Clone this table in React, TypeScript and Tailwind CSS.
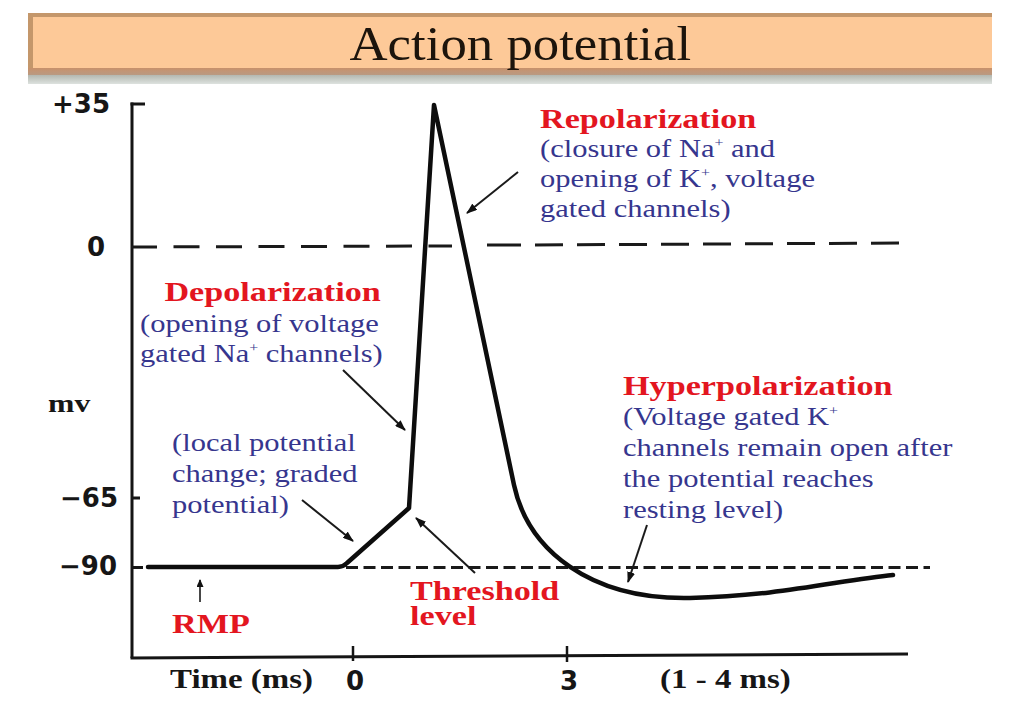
import React from "react";

const serif = "font-['Liberation_Serif','Times_New_Roman',serif]";
const sans = "font-['DejaVu_Sans','Verdana',sans-serif]";
const sup = "text-[13px] top-[-10px]";

export default function App() {
  return (
    <div className="w-[1013px] h-[707px] bg-white pt-[13px] overflow-hidden">
      <div className="ml-[28px] w-[964px]">
        <div className="h-[55px] border-t-4 border-l-[5px] border-[#c4976b] bg-[#fdc998] flex items-center justify-center">
          <h1
            className={`${serif} text-[48px] leading-none text-[#1c140c] scale-x-[1.1] translate-x-[8px] mt-[3px] whitespace-nowrap`}
          >
            Action potential
          </h1>
        </div>
        <div className="h-[7px] bg-linear-to-b from-[#c8916b] to-[#b99a82]" />
        <div className="h-[9px] bg-linear-to-b from-[#b4b8b0] to-[#dde2df]" />
      </div>

      <div className="relative h-[623px]">
        <svg
          className="absolute inset-0"
          width="1013"
          height="623"
          viewBox="0 84 1013 623"
        >
          <defs>
            <marker
              id="ah"
              viewBox="0 0 11 8"
              refX="10"
              refY="4"
              markerWidth="11"
              markerHeight="8"
              markerUnits="userSpaceOnUse"
              orient="auto"
            >
              <path d="M0,0 L11,4 L0,8 z" fill="#111" />
            </marker>
            <marker
              id="ahs"
              viewBox="0 0 8 7"
              refX="7"
              refY="3.5"
              markerWidth="8"
              markerHeight="7"
              markerUnits="userSpaceOnUse"
              orient="auto"
            >
              <path d="M0,0 L8,3.5 L0,7 z" fill="#111" />
            </marker>
          </defs>

          {/* axes */}
          <g stroke="#151515" strokeWidth="3" fill="none">
            <line x1="132" y1="102.5" x2="132" y2="658" />
            <line x1="130.5" y1="104" x2="145" y2="104" />
            <line x1="132" y1="498" x2="140" y2="498" />
            <line x1="131" y1="567.5" x2="143" y2="567.5" />
            <line x1="130.5" y1="658" x2="908" y2="654" />
          </g>
          <g stroke="#151515" strokeWidth="2.5">
            <line x1="353" y1="646" x2="353" y2="661" />
            <line x1="567" y1="646" x2="567" y2="662" />
          </g>

          {/* zero dashed line */}
          <g stroke="#1a1a1a" strokeWidth="3" fill="none">
            <line x1="131" y1="247" x2="452" y2="246" strokeDasharray="26 16.5" />
            <line x1="487" y1="245" x2="521" y2="245" />
            <line x1="535" y1="245" x2="900" y2="243" strokeDasharray="28 14" />
          </g>

          {/* -90 dashed line */}
          <line
            x1="346"
            y1="567.5"
            x2="930"
            y2="567.5"
            stroke="#1a1a1a"
            strokeWidth="3"
            strokeDasharray="12 5.5"
          />

          {/* action potential curve */}
          <path
            d="M 148 567 L 338 567 Q 343 567 347 563 L 409 508 L 434 105 L 514 485 C 528 550, 590 600, 690 598 C 780 596, 840 580, 893 575"
            stroke="#0d0d0d"
            strokeWidth="4.5"
            fill="none"
            strokeLinejoin="round"
            strokeLinecap="round"
          />

          {/* arrows */}
          <g stroke="#1a1a1a" strokeWidth="2" fill="none" markerEnd="url(#ah)">
            <line x1="518" y1="172" x2="467" y2="213" />
            <line x1="343" y1="370" x2="405" y2="430" />
            <line x1="302" y1="500" x2="353" y2="541" />
            <line x1="475" y1="573" x2="416" y2="518" />
            <line x1="647" y1="525" x2="628" y2="582" />
          </g>
          <line
            x1="200"
            y1="602"
            x2="200"
            y2="580"
            stroke="#1a1a1a"
            strokeWidth="1.6"
            markerEnd="url(#ahs)"
          />
        </svg>

        {/* y axis labels */}
        <div className={`${sans} absolute left-[52px] top-[5px] text-[26px] leading-[30px] font-bold text-[#161616]`}>+35</div>
        <div className={`${sans} absolute left-[87px] top-[148px] text-[26px] leading-[30px] font-bold text-[#161616]`}>0</div>
        <div className={`${serif} absolute left-[48px] top-[305px] text-[26px] leading-[30px] font-bold text-[#161616] origin-left scale-x-[1.22]`}>mv</div>
        <div className={`${sans} absolute left-[60px] top-[399px] text-[26px] leading-[30px] font-bold text-[#161616]`}>−65</div>
        <div className={`${sans} absolute left-[59px] top-[467px] text-[26px] leading-[30px] font-bold text-[#161616]`}>−90</div>

        {/* x axis labels */}
        <div className={`${serif} absolute left-[170px] top-[580px] text-[27px] leading-[30px] font-bold text-[#161616] origin-left scale-x-[1.22] whitespace-nowrap`}>Time (ms)</div>
        <div className={`${sans} absolute left-[346px] top-[582px] text-[26px] leading-[30px] font-bold text-[#161616]`}>0</div>
        <div className={`${sans} absolute left-[560px] top-[582px] text-[26px] leading-[30px] font-bold text-[#161616]`}>3</div>
        <div className={`${serif} absolute left-[660px] top-[580px] text-[27px] leading-[30px] font-bold text-[#161616] origin-left scale-x-[1.22] whitespace-nowrap`}>(1 - 4 ms)</div>

        {/* Repolarization */}
        <div className={`${serif} absolute left-[540px] top-[20px] origin-left scale-x-[1.22] whitespace-nowrap flex flex-col`}>
          <div className="text-[28px] leading-[30px] font-bold text-[#e3161f]">Repolarization</div>
          <div className="text-[25px] leading-[30px] text-[#36368e] flex flex-col">
            <div>
              (closure of Na<sup className={sup}>+</sup> and
            </div>
            <div>
              opening of K<sup className={sup}>+</sup>, voltage
            </div>
            <div>gated channels)</div>
          </div>
        </div>

        {/* Depolarization */}
        <div className={`${serif} absolute left-[140px] top-[191px] origin-left scale-x-[1.22] whitespace-nowrap flex flex-col`}>
          <div className="pl-[20px] text-[28px] leading-[34px] font-bold text-[#e3161f]">Depolarization</div>
          <div className="text-[25px] leading-[30px] text-[#36368e] flex flex-col">
            <div>(opening of voltage</div>
            <div>
              gated Na<sup className={sup}>+</sup> channels)
            </div>
          </div>
        </div>

        {/* Local potential */}
        <div className={`${serif} absolute left-[172px] top-[343px] origin-left scale-x-[1.22] whitespace-nowrap text-[25px] leading-[31px] text-[#36368e] flex flex-col`}>
          <div>(local potential</div>
          <div>change; graded</div>
          <div>potential)</div>
        </div>

        {/* Hyperpolarization */}
        <div className={`${serif} absolute left-[623px] top-[286px] origin-left scale-x-[1.22] whitespace-nowrap flex flex-col`}>
          <div className="text-[28px] leading-[31px] font-bold text-[#e3161f]">Hyperpolarization</div>
          <div className="text-[25px] leading-[31px] text-[#36368e] flex flex-col">
            <div>
              (Voltage gated K<sup className={sup}>+</sup>
            </div>
            <div>channels remain open after</div>
            <div>the potential reaches</div>
            <div>resting level)</div>
          </div>
        </div>

        {/* Threshold level */}
        <div className={`${serif} absolute left-[410px] top-[494px] origin-left scale-x-[1.22] whitespace-nowrap text-[28px] leading-[25px] font-bold text-[#e3161f] flex flex-col`}>
          <div>Threshold</div>
          <div>level</div>
        </div>

        {/* RMP */}
        <div className={`${serif} absolute left-[172px] top-[524px] origin-left scale-x-[1.22] whitespace-nowrap text-[28px] leading-[31px] font-bold text-[#e3161f]`}>
          RMP
        </div>
      </div>
    </div>
  );
}
